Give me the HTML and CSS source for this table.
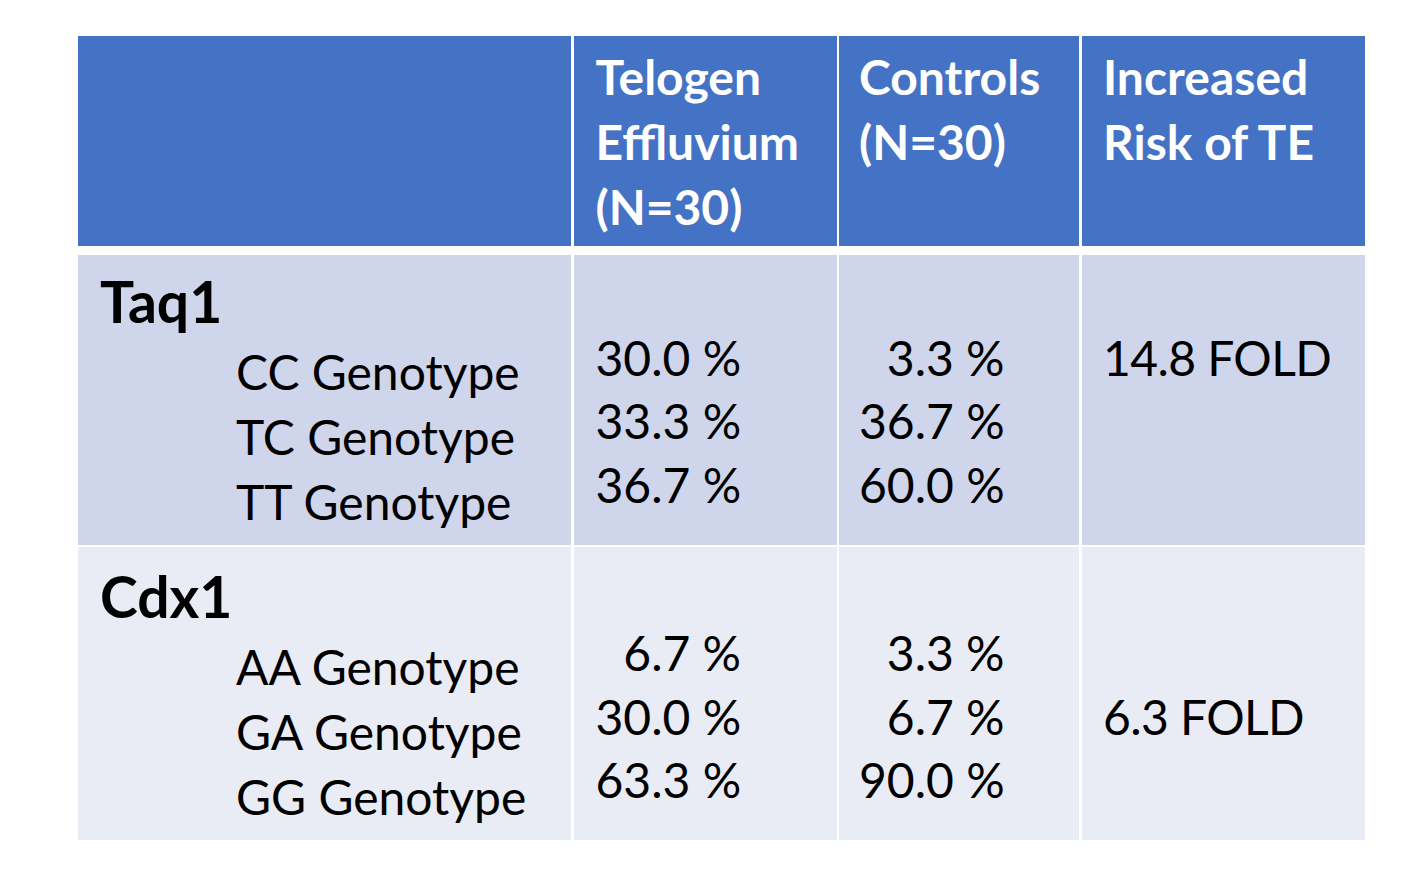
FILE: index.html
```html
<!DOCTYPE html>
<html>
<head>
<meta charset="utf-8">
<link rel="stylesheet" href="styles.css">
</head>
<body>
<div class="table">
  <div class="row head-row">
    <div class="cell head c1"></div>
    <div class="cell head c2"><div class="htext">Telogen<br>Effluvium<br>(N=30)</div></div>
    <div class="cell head c3"><div class="htext">Controls<br>(N=30)</div></div>
    <div class="cell head c4"><div class="htext">Increased<br>Risk of TE</div></div>
  </div>

  <div class="body">
    <div class="row r1">
      <div class="cell c1 first">
        <div class="gene">Taq1</div>
        <div class="genos">
          <div class="line">CC Genotype</div>
          <div class="line">TC Genotype</div>
          <div class="line">TT Genotype</div>
        </div>
      </div>
      <div class="cell c2 nums"><div class="numcol"><div class="line">30.0 %</div><div class="line">33.3 %</div><div class="line">36.7 %</div></div></div>
      <div class="cell c3 nums"><div class="numcol"><div class="line">3.3 %</div><div class="line">36.7 %</div><div class="line">60.0 %</div></div></div>
      <div class="cell c4 nums"><div class="line">14.8 FOLD</div></div>
    </div>

    <div class="row r2">
      <div class="cell c1 first">
        <div class="gene">Cdx1</div>
        <div class="genos">
          <div class="line">AA Genotype</div>
          <div class="line">GA Genotype</div>
          <div class="line">GG Genotype</div>
        </div>
      </div>
      <div class="cell c2 nums"><div class="numcol"><div class="line">6.7 %</div><div class="line">30.0 %</div><div class="line">63.3 %</div></div></div>
      <div class="cell c3 nums"><div class="numcol"><div class="line">3.3 %</div><div class="line">6.7 %</div><div class="line">90.0 %</div></div></div>
      <div class="cell c4 nums"><div class="line">&nbsp;</div><div class="line">6.3 FOLD</div></div>
    </div>
  </div>
</div>
</body>
</html>
```

FILE: styles.css
```css
html, body {
  margin: 0;
  padding: 0;
  background: #ffffff;
}

body {
  font-family: "Lato", "Liberation Sans", sans-serif;
  color: #000000;
}

.table {
  display: flex;
  flex-direction: column;
  margin: 36px 0 0 78px;
  width: 1286.5px;
}

.body {
  display: flex;
  flex-direction: column;
  gap: 2.5px;
  margin-top: 8.5px;
}

.row {
  display: grid;
  grid-template-columns: 493px 263px 240px 283px;
  column-gap: 2.5px;
}

.head-row {
  height: 210px;
}

.r1 {
  height: 290px;
  background: transparent;
}

.r2 {
  height: 293px;
}

.r1 .cell {
  background: #cfd5ea;
}

.r2 .cell {
  background: #e9ebf5;
}

.cell {
  box-sizing: border-box;
  padding-left: 22px;
}

.c3 {
  padding-left: 20px;
}

.c4 {
  padding-left: 21.5px;
}

.head {
  background: #4472c4;
  color: #ffffff;
  font-weight: 700;
  font-size: 48px;
  line-height: 65px;
  padding-top: 8px;
}

.first {
  padding-top: 14px;
}

.r2 .first {
  padding-top: 17px;
}

.gene {
  font-weight: 700;
  font-size: 57px;
  line-height: 65px;
}

.genos {
  padding-left: 136px;
  margin-top: 5px;
}

.line {
  font-size: 48px;
  line-height: 65px;
  white-space: nowrap;
}

.nums {
  padding-top: 71px;
}

.r2 .nums {
  padding-top: 74px;
}

.nums .line {
  line-height: 63.5px;
}

.c4 .line {
  letter-spacing: -0.6px;
}

.numcol {
  display: inline-block;
  text-align: right;
  font-variant-numeric: tabular-nums;
}
```
